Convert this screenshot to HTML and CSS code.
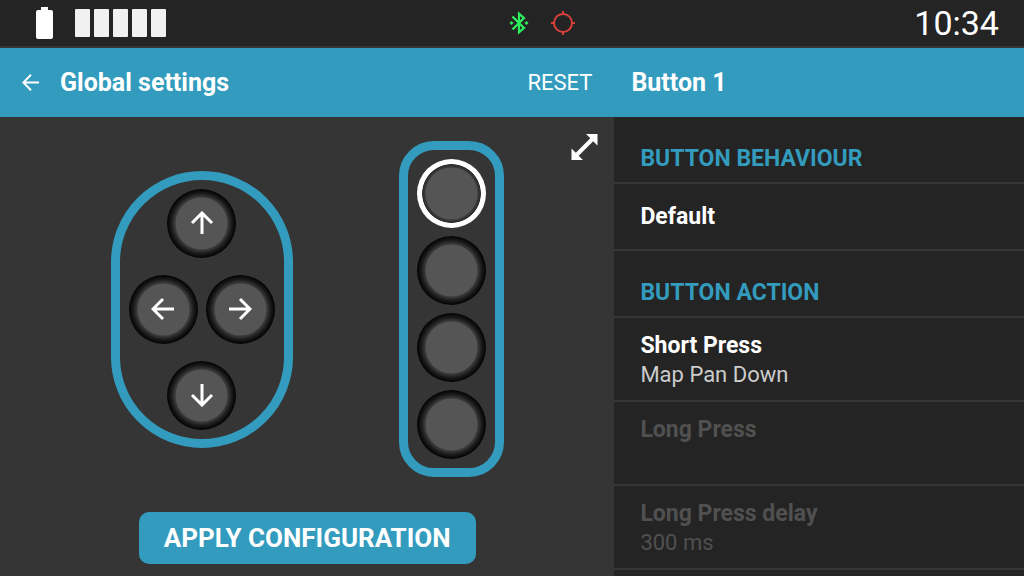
FILE: index.html
```html
<!DOCTYPE html>
<html lang="en">
<head>
<meta charset="UTF-8">
<title>Global settings</title>
<meta name="viewport" content="width=device-width, initial-scale=1">
<link rel="stylesheet" href="styles.css">
</head>
<body>
<div class="status-bar">
    <div class="status-left">
        <svg class="battery" width="17" height="32" viewBox="0 0 17 32" fill="#fff"><path d="M5 0h7v3h3q2 0 2 2v25q0 2-2 2H2q-2 0-2-2V5q0-2 2-2h3z"/></svg>
        <div class="signal"><i></i><i></i><i></i><i></i><i></i></div>
    </div>
    <div class="status-icons">
        <svg width="20" height="24" viewBox="0 0 20 24" fill="none" stroke="#2bf05c" stroke-width="2.200"><path d="M3.500 5.500L15 17l-5 4.300V2.700L15 7 3.500 18.500"/><path d="M2.500 10l2 2-2 2-2-2zM17.500 10l2 2-2 2-2-2z" fill="#2bf05c" stroke="none"/></svg>
        <svg width="24" height="24" viewBox="0 0 24 24" fill="none" stroke="#d9403c" stroke-width="2"><circle cx="12" cy="12" r="9"/><path d="M12 0v4M12 20v4M0 12h4M20 12h4"/></svg>
    </div>
    <div class="clock">10:34</div>
</div>
<header class="header">
    <div class="header-main">
        <button class="back" aria-label="Back">
            <svg width="18" height="18" viewBox="0 0 18 18" fill="none" stroke="#fff" stroke-width="2"><path d="M17 8.500H1.500M9 .8L1.300 8.500 9 16.200"/></svg>
        </button>
        <h1>Global settings</h1>
        <button class="reset">RESET</button>
    </div>
    <h2>Button 1</h2>
</header>
<main class="content">
    <section class="remote">
        <button class="expand" aria-label="Expand">
            <svg width="28" height="28" viewBox="0 0 28 28" fill="#fff"><path d="M16 1h11.500v11.500l-4.300-4.300L8.700 22.700l4.300 4.300H1.500V15.500l4.300 4.300L20.300 5.300z"/></svg>
        </button>
        <div class="controllers">
            <div class="dpad">
                <button class="key up" aria-label="Up"><svg width="24" height="24" viewBox="0 0 24 24"><path d="M12 23V2.500M2 12L12 2l10 10"/></svg></button>
                <button class="key left" aria-label="Left"><svg width="24" height="24" viewBox="0 0 24 24"><path d="M23 12H2.500M12 2L2 12l10 10"/></svg></button>
                <button class="key right" aria-label="Right"><svg width="24" height="24" viewBox="0 0 24 24"><path d="M1 12h20.500M12 2l10 10-10 10"/></svg></button>
                <button class="key down" aria-label="Down"><svg width="24" height="24" viewBox="0 0 24 24"><path d="M12 1v20.500M2 12l10 10 10-10"/></svg></button>
            </div>
            <div class="strip">
                <button class="key selected" aria-label="Button 1"></button>
                <button class="key" aria-label="Button 2"></button>
                <button class="key" aria-label="Button 3"></button>
                <button class="key" aria-label="Button 4"></button>
            </div>
        </div>
        <button class="apply">APPLY CONFIGURATION</button>
    </section>
    <section class="options">
        <h3>BUTTON BEHAVIOUR</h3>
        <button class="row single"><b>Default</b></button>
        <h3>BUTTON ACTION</h3>
        <button class="row"><b>Short Press</b><span>Map Pan Down</span></button>
        <button class="row" disabled><b>Long Press</b></button>
        <button class="row" disabled><b>Long Press delay</b><span>300 ms</span></button>
    </section>
</main>
</body>
</html>
```

FILE: styles.css
```css
* {
    box-sizing: border-box;
}
body {
    margin: 0;
    height: 100vh;
    display: flex;
    flex-direction: column;
    overflow: hidden;
    background: #353535;
    color: #fff;
    font-family: Roboto, "Liberation Sans", sans-serif;
}
h1, h2, h3 {
    margin: 0;
    font-weight: bold;
}
button {
    border: none;
    padding: 0;
    background: none;
    color: inherit;
    font-family: inherit;
    cursor: pointer;
}
svg {
    display: block;
}

/* status bar */
.status-bar {
    display: flex;
    align-items: center;
    justify-content: space-between;
    height: 48px;
    flex-shrink: 0;
    padding: 0 25px 0 36px;
    background: #242424;
    border-bottom: 2px solid #353535;
}
.status-left {
    display: flex;
    align-items: center;
    gap: 22px;
}
.signal {
    display: flex;
    gap: 4px;
}
.signal i {
    width: 15px;
    height: 28px;
    border-radius: 1px;
    background: #f1f1f1;
}
.status-icons {
    display: flex;
    align-items: center;
    gap: 22px;
    padding-left: 4px;
}
.clock {
    font-size: 34px;
    line-height: 44px;
}

/* header */
.header {
    display: grid;
    grid-template-columns: 60% 40%;
    align-items: center;
    height: 69px;
    flex-shrink: 0;
    background: #339bbd;
}
.header-main {
    display: flex;
    align-items: center;
    padding: 0 22px;
}
.header h1, .header h2 {
    font-size: 25px;
    line-height: 32px;
}
.header h1 {
    margin-left: 20px;
}
.header h2 {
    padding-left: 17px;
}
.reset {
    margin-left: auto;
    font-size: 22px;
    line-height: 32px;
}

.content {
    flex: 1;
    min-height: 0;
    display: grid;
    grid-template-columns: 60% 40%;
}

/* remote */
.remote {
    position: relative;
    display: flex;
    flex-direction: column;
    align-items: center;
    justify-content: space-between;
    padding: 24px 0 12px;
}
.expand {
    position: absolute;
    top: 16px;
    right: 16px;
}
.controllers {
    width: 100%;
    display: flex;
    align-items: center;
    justify-content: space-between;
    padding: 0 18%;
}
.dpad, .strip {
    display: grid;
    border: 9px solid #339bbd;
    padding: 9px;
}
.dpad {
    grid-template-columns: 1fr 1fr;
    gap: 17px 8px;
    justify-items: center;
    border-radius: 91px;
}
.strip {
    gap: 8px;
    border-radius: 35px;
}
.up, .down {
    grid-column: span 2;
}
.key {
    display: flex;
    align-items: center;
    justify-content: center;
    width: 69px;
    height: 69px;
    border-radius: 50%;
    background: radial-gradient(closest-side, #555 74%, #3e3e3e 76%, #1c1c1c 87%, #050505 98%);
}
.key svg {
    fill: none;
    stroke: #fff;
    stroke-width: 3;
}
.key.selected {
    background: radial-gradient(closest-side, #555 74%, #3e3e3e 76%, #2a2a2a 84%, #fff 86%);
}
.apply {
    padding: 0 25px;
    border-radius: 10px;
    background: #339bbd;
    font-size: 26px;
    font-weight: bold;
    line-height: 52px;
}

/* options */
.options {
    background: #242424;
    overflow: hidden;
}
.options h3 {
    height: 67px;
    padding: 26px 26px 0;
    border-bottom: 2px solid #353535;
    color: #339bbd;
    font-size: 23px;
    line-height: 32px;
}
.row {
    display: flex;
    flex-direction: column;
    width: 100%;
    height: 84px;
    padding: 13px 26px 0;
    border-bottom: 2px solid #353535;
    text-align: left;
}
.row.single {
    height: 67px;
    padding-top: 18px;
}
.row b {
    font-size: 23px;
    line-height: 30px;
}
.row span {
    color: #ccc;
    font-size: 22px;
    line-height: 28px;
}
.row:disabled, .row:disabled span {
    color: #505050;
    cursor: default;
}
```
